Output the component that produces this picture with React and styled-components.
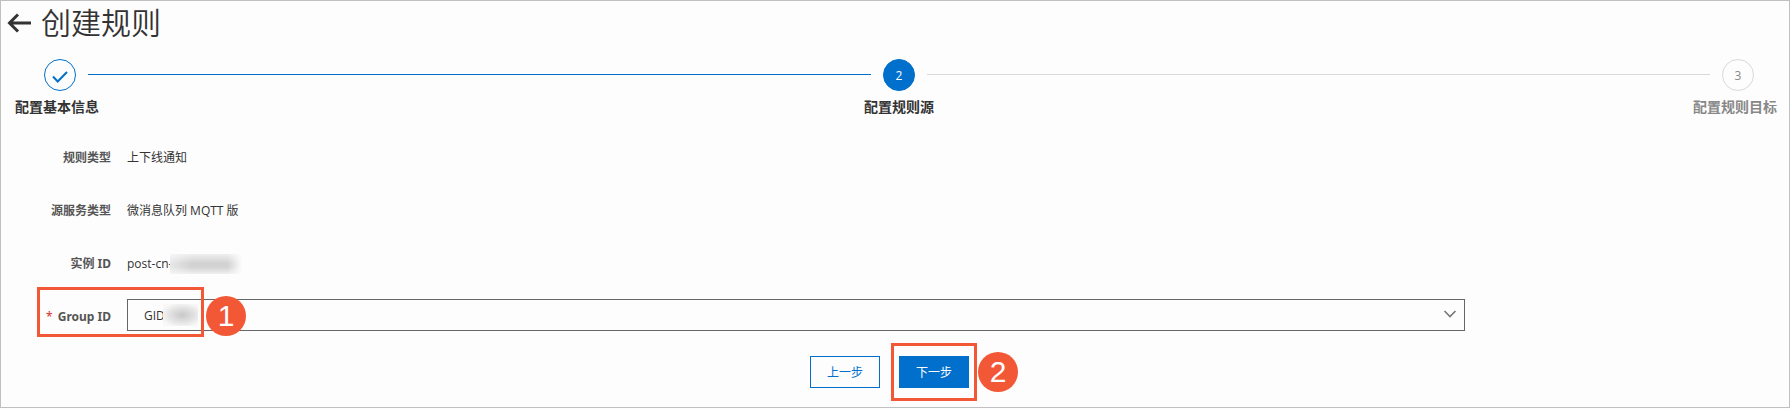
import React, { useState } from 'react';
import styled, { createGlobalStyle, css } from 'styled-components';

const GlobalStyle = createGlobalStyle`
  * {
    box-sizing: border-box;
  }
  body {
    margin: 0;
    background: #fdfdfd;
    color: #333;
    font-family: 'Open Sans', 'Noto Sans CJK SC', sans-serif;
    font-size: 12px;
    line-height: 18px;
  }
`;
const Page = styled.main`
  border: 1px solid #c0c0c0;
  padding-bottom: 19px;
`;
const Header = styled.header`
  display: flex;
  align-items: center;
  gap: 9px;
  padding: 0 5px;
`;
const BackButton = styled.button`
  display: flex;
  padding: 0;
  border: 0;
  background: none;
  color: #333;
  cursor: pointer;
`;
const Title = styled.h1`
  margin: 0;
  padding-bottom: 4px;
  font-family: 'Noto Sans CJK SC', sans-serif;
  font-size: 30px;
  font-weight: 350;
  line-height: 40px;
`;
const StepList = styled.ol`
  display: flex;
  margin: 0;
  padding: 14px 35px 0 43px;
  list-style: none;
`;
const StepItem = styled.li`
  display: flex;
  flex: ${props => (props.$last ? 'none' : '1')};
`;
const Step = styled.div`
  display: flex;
  flex-direction: column;
  align-items: center;
  width: 32px;
`;
const Circle = styled.span`
  display: flex;
  flex: none;
  align-items: center;
  justify-content: center;
  width: 32px;
  height: 32px;
  padding-top: 2px;
  border: 1px solid #0070cc;
  border-radius: 50%;
  color: #0070cc;
  ${props => props.$status === 'active' && css`
    background: #0070cc;
    color: #fff;
  `}
  ${props => props.$status === 'wait' && css`
    border-color: #d9d9d9;
    color: #888;
  `}
`;
const StepName = styled.span`
  width: 90px;
  margin-top: 6px;
  font-size: 14px;
  font-weight: 700;
  line-height: 20px;
  text-align: ${props => (props.$center ? 'center' : 'left')};
  color: ${props => (props.$status === 'wait' ? '#888' : '#333')};
`;
const Line = styled.span`
  flex: 1;
  height: 1px;
  margin: 15px 12px 0;
  background: ${props => (props.$done ? '#0070cc' : '#d9d9d9')};
`;
const Form = styled.form`
  margin: 0;
`;
const Fields = styled.div`
  display: flex;
  flex-direction: column;
  gap: 21px;
  margin: 23px 324px 0 36px;
`;
const Row = styled.div`
  position: relative;
  display: flex;
  align-items: center;
  gap: 16px;
  height: 32px;
`;
const labelStyle = css`
  flex: none;
  width: 74px;
  padding-top: 3px;
  font-family: 'Noto Sans', 'Noto Sans CJK SC', sans-serif;
  font-weight: 700;
  text-align: right;
  white-space: nowrap;
  color: #555;
`;
const Name = styled.span`
  ${labelStyle}
`;
const Label = styled.label`
  ${labelStyle}
`;
const Required = styled.span`
  margin-right: 5px;
  font-weight: 400;
  color: #d93026;
`;
const Value = styled.span`
  display: flex;
  align-items: center;
  padding-top: 3px;
`;
const Mask = styled.span`
  width: 72px;
  height: 20px;
  margin-left: -2px;
  background:
    linear-gradient(180deg, #fdfdfdb0, #fdfdfd00 45%, #fdfdfd00 65%, #fdfdfdb0),
    linear-gradient(90deg, #e8e8e8, #d2d2d2 30%, #d2d2d2 80%, #fdfdfd);
`;
const SelectBox = styled.div`
  position: relative;
  display: flex;
  flex: 1;
`;
const Select = styled.select`
  flex: 1;
  height: 32px;
  padding: 2px 40px 0 16px;
  border: 1px solid #666;
  border-radius: 0;
  appearance: none;
  background: transparent;
  color: #333;
  font: inherit;
`;
const SelectMask = styled.span`
  position: absolute;
  top: 5px;
  left: 36px;
  width: 35px;
  height: 22px;
  background: radial-gradient(ellipse at 55% 50%, #c8c8c8, #e2e2e2 45%, #f8f8f8 80%);
  pointer-events: none;
`;
const Chevron = styled.svg`
  position: absolute;
  top: 10px;
  right: 8px;
  pointer-events: none;
`;
const Actions = styled.div`
  display: flex;
  justify-content: center;
  gap: 19px;
  margin-top: 25px;
  padding-right: 11px;
`;
const ActionItem = styled.div`
  position: relative;
`;
const Button = styled.button`
  width: 70px;
  height: 32px;
  padding: 2px 0 0;
  border: 1px solid #0070cc;
  background: ${props => (props.$primary ? '#0070cc' : 'transparent')};
  color: ${props => (props.$primary ? '#fff' : '#0070cc')};
  font: inherit;
  cursor: pointer;
`;
const Frame = styled.span`
  position: absolute;
  top: ${props => props.$top}px;
  left: ${props => props.$left}px;
  width: ${props => props.$width}px;
  height: ${props => props.$height}px;
  border: 3px solid #f35836;
  pointer-events: none;
`;
const Badge = styled.span`
  position: absolute;
  top: ${props => props.$top}px;
  left: ${props => props.$left}px;
  width: 40px;
  height: 40px;
  border-radius: 50%;
  background: #f35836;
  color: #fff;
  font-family: 'Liberation Sans', Arial, sans-serif;
  font-size: 30px;
  line-height: 40px;
  text-align: center;
  pointer-events: none;
`;

const steps = [
  { name: '配置基本信息', status: 'done' },
  { name: '配置规则源', status: 'active' },
  { name: '配置规则目标', status: 'wait' },
];

function Steps() {
  return (
    <StepList>
      {steps.map((step, i) => (
        <StepItem key={step.name} $last={i === steps.length - 1}>
          <Step>
            <Circle $status={step.status}>
              {step.status === 'done' ? (
                <svg width="16" height="14" viewBox="0 0 16 14" fill="none" stroke="currentColor" strokeWidth="2">
                  <path d="M1 7.5l4.7 5L15 3" />
                </svg>
              ) : i + 1}
            </Circle>
            <StepName $status={step.status} $center={step.status === 'active'}>{step.name}</StepName>
          </Step>
          {i < steps.length - 1 && <Line $done={step.status === 'done'} />}
        </StepItem>
      ))}
    </StepList>
  );
}

function App() {
  const [group, setGroup] = useState('GID');

  return (
    <Page>
      <GlobalStyle />
      <Header>
        <BackButton type="button" aria-label="返回">
          <svg width="26" height="22" viewBox="0 0 26 22" fill="none" stroke="currentColor" strokeWidth="3">
            <path d="M3.5 11H25M12 2.5L3.5 11l8.5 8.5" />
          </svg>
        </BackButton>
        <Title>创建规则</Title>
      </Header>
      <Steps />
      <Form onSubmit={e => e.preventDefault()}>
        <Fields>
          <Row>
            <Name>规则类型</Name>
            <Value>上下线通知</Value>
          </Row>
          <Row>
            <Name>源服务类型</Name>
            <Value>微消息队列 MQTT 版</Value>
          </Row>
          <Row>
            <Name>实例 ID</Name>
            <Value>post-cn-<Mask /></Value>
          </Row>
          <Row>
            <Label htmlFor="group"><Required>*</Required>Group ID</Label>
            <SelectBox>
              <Select id="group" value={group} onChange={e => setGroup(e.target.value)}>
                <option value="GID">GID</option>
              </Select>
              <SelectMask />
              <Chevron width="14" height="10" viewBox="0 0 14 10" fill="none" stroke="#777" strokeWidth="1.6">
                <path d="M1.5 2L7 7.5 12.5 2" />
              </Chevron>
            </SelectBox>
            <Frame $top={-12} $left={0} $width={167} $height={50} />
            <Badge $top={-3} $left={169}>1</Badge>
          </Row>
        </Fields>
        <Actions>
          <Button type="button">上一步</Button>
          <ActionItem>
            <Button type="submit" $primary>下一步</Button>
            <Frame $top={-13} $left={-8} $width={86} $height={58} />
            <Badge $top={-4} $left={79}>2</Badge>
          </ActionItem>
        </Actions>
      </Form>
    </Page>
  );
}

export default App;
